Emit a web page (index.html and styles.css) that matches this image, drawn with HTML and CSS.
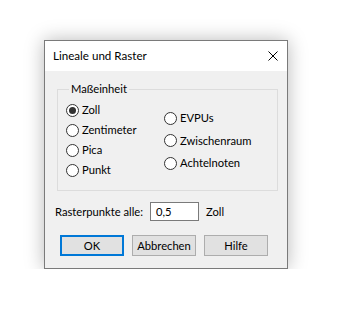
FILE: index.html
```html
<!DOCTYPE html>
<html lang="de">
<head>
<meta charset="utf-8">
<title>Lineale und Raster</title>
<link rel="stylesheet" href="styles.css">
</head>
<body>
<div class="window">
  <div class="titlebar">
    <span class="title">Lineale und Raster</span>
    <svg class="close" width="10" height="10" viewBox="0 0 10 10"><path d="M0.5 0.5 L9.5 9.5 M9.5 0.5 L0.5 9.5" stroke="#000" stroke-width="1" fill="none"/></svg>
  </div>
  <div class="content">
    <fieldset class="group">
      <legend class="legend">Maßeinheit</legend>
      <div class="cols">
        <div class="col col1">
          <label class="radio"><span class="dot checked"></span>Zoll</label>
          <label class="radio"><span class="dot"></span>Zentimeter</label>
          <label class="radio"><span class="dot"></span>Pica</label>
          <label class="radio"><span class="dot"></span>Punkt</label>
        </div>
        <div class="col col2">
          <label class="radio"><span class="dot"></span>EVPUs</label>
          <label class="radio"><span class="dot"></span>Zwischenraum</label>
          <label class="radio"><span class="dot"></span>Achtelnoten</label>
        </div>
      </div>
    </fieldset>
    <div class="grid-row">
      <span class="lbl">Rasterpunkte alle:</span>
      <span class="input">0,5</span>
      <span class="unit">Zoll</span>
    </div>
    <div class="buttons">
      <span class="btn btn-ok">OK</span>
      <span class="btn">Abbrechen</span>
      <span class="btn">Hilfe</span>
    </div>
  </div>
</div>
</body>
</html>
```
FILE: styles.css
```css
html, body {
  margin: 0;
  padding: 0;
  background: #ffffff;
}
body {
  padding: 40px 0 0 44px;
  font-family: "Lato", "Open Sans", sans-serif;
  font-size: 11.2px;
  color: #000;
}
.window {
  box-sizing: border-box;
  width: 244px;
  height: 229px;
  border: 1px solid #7a7a7a;
  background: #f0f0f0;
  box-shadow: 0 0 18px rgba(0, 0, 0, 0.28);
  display: flex;
  flex-direction: column;
}
.titlebar {
  flex: none;
  height: 30px;
  background: #ffffff;
  display: flex;
  align-items: center;
  justify-content: space-between;
  padding: 0 9px 0 8px;
}
.title {
  font-size: 11.6px;
  line-height: 16px;
  white-space: nowrap;
}
.close {
  display: block;
}
.content {
  padding: 0 9px 0 0;
  display: flex;
  flex-direction: column;
}
.group {
  margin: 10px 0 0 12px;
  padding: 3px 0 10px 8px;
  border: 1px solid #dcdcdc;
  min-width: 0;
}
.legend {
  padding: 0 2px;
  margin-left: 3px;
  line-height: 16px;
  white-space: nowrap;
}
.cols {
  display: flex;
}
.col {
  display: flex;
  flex-direction: column;
}
.col1 {
  width: 98px;
}
.col1 .radio {
  height: 20px;
}
.col2 {
  margin-top: 7px;
}
.col2 .radio {
  height: 22.5px;
}
.radio {
  display: flex;
  align-items: center;
  gap: 3px;
  line-height: 16px;
  white-space: nowrap;
}
.dot {
  flex: none;
  box-sizing: border-box;
  width: 13px;
  height: 13px;
  border: 1px solid #333333;
  border-radius: 50%;
  background: #ffffff;
  display: flex;
  align-items: center;
  justify-content: center;
}
.dot.checked::after {
  content: "";
  width: 7px;
  height: 7px;
  border-radius: 50%;
  background: #333333;
}
.grid-row {
  display: flex;
  align-items: center;
  margin: 11px 0 0 10px;
  white-space: nowrap;
}
.lbl {
  flex: none;
  width: 95px;
}
.input {
  flex: none;
  box-sizing: border-box;
  width: 49px;
  height: 19px;
  border: 1px solid #7a7a7a;
  background: #ffffff;
  padding: 0 5px;
  line-height: 17px;
}
.unit {
  margin-left: 7px;
}
.buttons {
  display: flex;
  gap: 8px;
  margin: 14px 0 0 15px;
}
.btn {
  flex: none;
  box-sizing: border-box;
  width: 64px;
  height: 21px;
  background: #e1e1e1;
  border: 1px solid #adadad;
  display: flex;
  align-items: center;
  justify-content: center;
  line-height: 16px;
  white-space: nowrap;
}
.btn-ok {
  border: 2px solid #0078d7;
}
```
